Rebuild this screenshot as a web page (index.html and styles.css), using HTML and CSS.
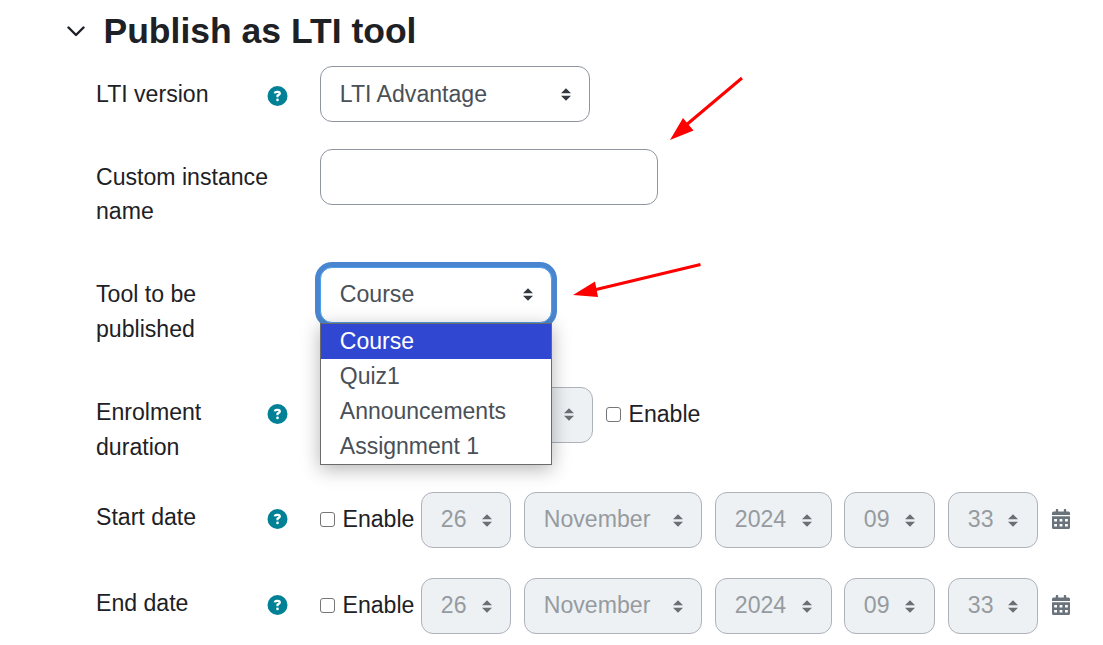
FILE: index.html
```html
<!DOCTYPE html>
<html lang="en">
<head>
    <meta charset="UTF-8">
    <title>Publish as LTI tool</title>
    <link rel="stylesheet" href="styles.css">
</head>
<body>
    <!-- shared icons -->
    <svg class="sprite" aria-hidden="true">
        <symbol id="help" viewBox="0 0 20 20">
            <circle cx="10" cy="10" r="10" fill="#008196"/>
            <path d="M7.300 7.400C7.400 6.300 8.200 5.900 9.200 5.900h1.200c1.200 0 1.900.7 1.900 1.500 0 .7-.4 1.100-.9 1.400L10 9.700v1.500" fill="none" stroke="#fff" stroke-width="2.200"/>
            <circle cx="10" cy="13.900" r="1.300" fill="#fff"/>
        </symbol>
        <symbol id="calendar" viewBox="0 0 18 20">
            <path fill="#6a737b" fill-rule="evenodd" d="M3.800 1a1.200 1.200 0 0 1 2.400 0v1.500h5.600V1a1.200 1.200 0 0 1 2.400 0v1.500h2.300A1.500 1.500 0 0 1 18 4v2H0V4a1.500 1.500 0 0 1 1.500-1.500h2.300zM0 7.300h18v11.200a1.500 1.500 0 0 1-1.500 1.500h-15A1.500 1.500 0 0 1 0 18.500zM2.200 10v2.600h2.800V10zm5.400 0v2.600h2.800V10zm5.400 0v2.600h2.800V10zM2.200 15v2.600h2.800V15zm5.400 0v2.600h2.800V15zm5.400 0v2.600h2.800V15z"/>
        </symbol>
    </svg>

    <form class="lti-form">
        <div class="section-header">
            <svg class="chevron" viewBox="0 0 18 11"><path d="M1.500 1.500L9 9l7.500-7.500"/></svg>
            <h2>Publish as LTI tool</h2>
        </div>

        <div class="form-row">
            <div class="row-label">
                <label for="version">LTI version</label>
                <svg class="help"><use href="#help"/></svg>
            </div>
            <select id="version" class="select version"><option>LTI Advantage</option></select>
        </div>

        <div class="form-row name-row">
            <div class="row-label">
                <label for="name">Custom instance name</label>
            </div>
            <input id="name" class="text-input" type="text">
        </div>

        <div class="form-row tool-row">
            <div class="row-label">
                <label for="tool">Tool to be published</label>
            </div>
            <div class="dropdown">
                <select id="tool" class="select tool focused"><option>Course</option></select>
                <ul class="dropdown-menu">
                    <li class="active">Course</li>
                    <li>Quiz1</li>
                    <li>Announcements</li>
                    <li>Assignment 1</li>
                </ul>
            </div>
        </div>

        <div class="form-row duration-row">
            <div class="row-label">
                <label>Enrolment duration</label>
                <svg class="help"><use href="#help"/></svg>
            </div>
            <div class="controls">
                <select class="select duration" disabled><option></option></select>
                <label class="check"><input type="checkbox">Enable</label>
            </div>
        </div>

        <div class="form-row date-row">
            <div class="row-label">
                <label>Start date</label>
                <svg class="help"><use href="#help"/></svg>
            </div>
            <div class="controls">
                <label class="check"><input type="checkbox">Enable</label>
                <select class="select day" disabled><option>26</option></select>
                <select class="select month" disabled><option>November</option></select>
                <select class="select year" disabled><option>2024</option></select>
                <select class="select hour" disabled><option>09</option></select>
                <select class="select minute" disabled><option>33</option></select>
                <svg class="calendar"><use href="#calendar"/></svg>
            </div>
        </div>

        <div class="form-row date-row">
            <div class="row-label">
                <label>End date</label>
                <svg class="help"><use href="#help"/></svg>
            </div>
            <div class="controls">
                <label class="check"><input type="checkbox">Enable</label>
                <select class="select day" disabled><option>26</option></select>
                <select class="select month" disabled><option>November</option></select>
                <select class="select year" disabled><option>2024</option></select>
                <select class="select hour" disabled><option>09</option></select>
                <select class="select minute" disabled><option>33</option></select>
                <svg class="calendar"><use href="#calendar"/></svg>
            </div>
        </div>
    </form>

    <!-- red pointer arrows -->
    <svg class="pointers" viewBox="0 0 1103 645">
        <path class="line" d="M742 78L685 126M700.500 264.500L594 290"/>
        <path class="head" d="M670 140l13-22 10.500 12.500zM573 295l22-13.500 3 15.500z"/>
    </svg>
</body>
</html>
```

FILE: styles.css
```css
* {
    box-sizing: border-box;
}

body {
    margin: 0;
    height: 645px;
    overflow: hidden;
    position: relative;
    background: #fff;
    color: #1d2125;
    font-family: "Liberation Sans", Arial, sans-serif;
    font-size: 23.1px;
    line-height: 35px;
}

.sprite {
    position: absolute;
    width: 0;
    height: 0;
}

.lti-form {
    padding-left: 96px;
}

.section-header {
    display: flex;
    align-items: center;
    height: 66px;
    margin-left: -29px;
    padding-bottom: 4px;
}

.section-header h2 {
    margin: 0 0 0 18.5px;
    font-size: 35.5px;
    line-height: 42px;
}

.chevron {
    width: 18px;
    height: 11px;
}

.chevron path {
    fill: none;
    stroke: #1d2125;
    stroke-width: 2.4;
    stroke-linecap: round;
    stroke-linejoin: round;
}

.form-row {
    display: flex;
    align-items: flex-start;
    height: 83px;
}

.name-row {
    height: 118px;
}

.name-row .row-label {
    line-height: 34px;
}

.tool-row {
    height: 117px;
}

.tool-row .row-label {
    padding-top: 10px;
}

.duration-row {
    height: 105px;
}

.date-row {
    height: 86px;
}

.row-label {
    display: flex;
    justify-content: space-between;
    flex: none;
    width: 192px;
    margin-right: 32px;
    padding-top: 11px;
}

.row-label label {
    max-width: 176px;
}

.help {
    flex: none;
    width: 21px;
    height: 20px;
    margin-top: 8.5px;
}

.select,
.text-input {
    appearance: none;
    flex: none;
    height: 56px;
    margin: 0;
    padding: 0 0 1px 18.8px;
    border: 1px solid #8f959e;
    border-radius: 12px;
    background-color: #fff;
    color: #495057;
    font: inherit;
    outline: none;
}

.select {
    background-image: url("data:image/svg+xml,%3csvg xmlns='http://www.w3.org/2000/svg' viewBox='0 0 4 5'%3e%3cpath fill='%23343a40' d='M2 0L0 2h4zm0 5L0 3h4z'/%3e%3c/svg%3e");
    background-repeat: no-repeat;
    background-position: right 18px center;
    background-size: 10px 13px;
}

.select:disabled {
    background-color: #edf1f4;
    opacity: 1;
    color: #969b9f;
    border-color: #aeb2ba;
    background-image: url("data:image/svg+xml,%3csvg xmlns='http://www.w3.org/2000/svg' viewBox='0 0 4 5'%3e%3cpath fill='%236c7074' d='M2 0L0 2h4zm0 5L0 3h4z'/%3e%3c/svg%3e");
}

.version {
    width: 270px;
    padding-top: 1px;
    padding-bottom: 0;
}

.text-input {
    width: 338px;
}

.tool {
    display: block;
    width: 232px;
    background-position: right 18px top 20px;
}

.focused {
    border-color: #4ba0eb;
    box-shadow: 0 0 0 5px #4a86d0;
}

.dropdown {
    position: relative;
}

.dropdown-menu {
    position: absolute;
    z-index: 2;
    top: 56px;
    left: 0;
    width: 232px;
    margin: 0;
    padding: 0;
    border: 1px solid #6b6b6b;
    background: #fff;
    color: #495057;
    list-style: none;
    box-shadow: 0 4px 18px rgba(0, 0, 0, 0.3);
}

.dropdown-menu li {
    height: 35px;
    padding-left: 18.8px;
    font-size: 23px;
    line-height: 34px;
}

.dropdown-menu .active {
    background: #3047d1;
    color: #fff;
}

.controls {
    display: flex;
    align-items: center;
    padding-top: 3px;
}

.check {
    display: flex;
    align-items: center;
    width: 101px;
    padding-bottom: 2px;
}

.check input {
    appearance: none;
    width: 15px;
    height: 15px;
    margin: 0 7.5px 0 0;
    border: 1.5px solid #767676;
    border-radius: 3px;
    background: #fff;
}

.duration {
    width: 273px;
    margin-right: 13px;
    background-position: right 18px top 20px;
}

.day {
    width: 90px;
    margin-right: 13px;
}

.month {
    width: 178px;
    margin-right: 13px;
}

.year {
    width: 117px;
    margin-right: 12px;
}

.hour {
    width: 91px;
    margin-right: 13px;
}

.minute {
    width: 90px;
    margin-right: 14px;
}

.year,
.hour,
.minute {
    background-position: right 19px center;
}

.calendar {
    flex: none;
    width: 18px;
    height: 20px;
    margin-bottom: 2px;
}

.pointers {
    position: absolute;
    z-index: 3;
    top: 0;
    left: 0;
    width: 1103px;
    height: 645px;
    pointer-events: none;
}

.pointers .line {
    fill: none;
    stroke: #f00;
    stroke-width: 3;
}

.pointers .head {
    fill: #f00;
}
```
